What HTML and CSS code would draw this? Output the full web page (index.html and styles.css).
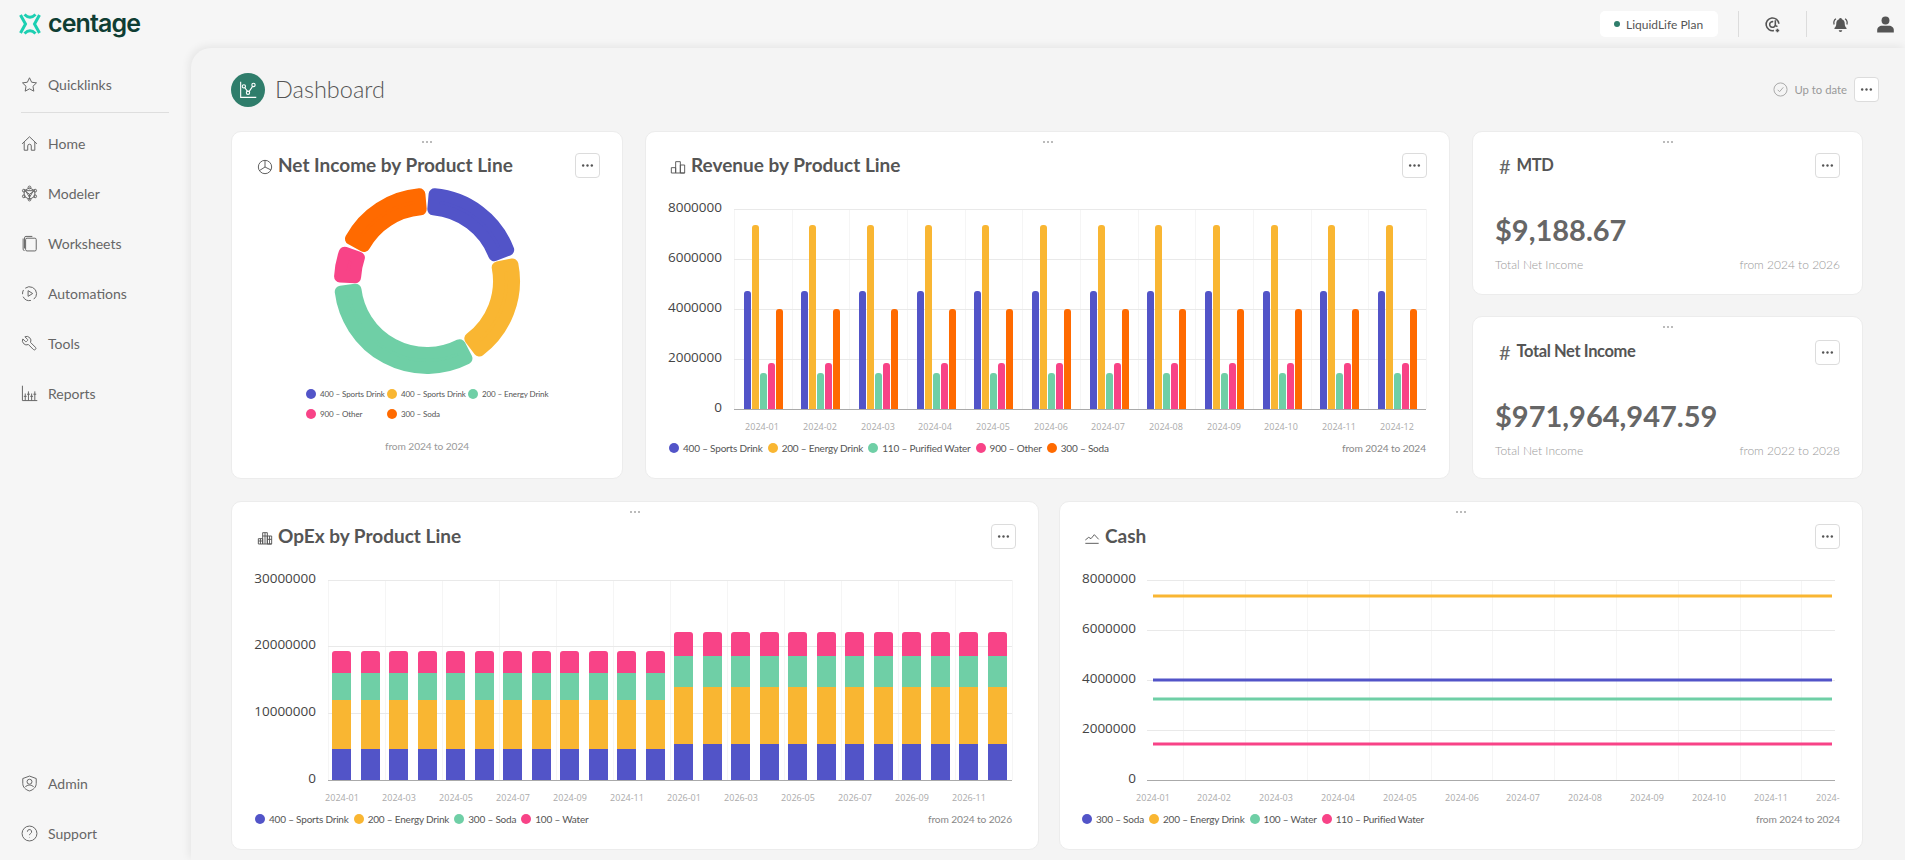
FILE: index.html
```html
<!DOCTYPE html>
<html lang="en">
<head>
<meta charset="utf-8">
<title>Dashboard</title>
<link rel="stylesheet" href="styles.css">
</head>
<body>
<svg class="defs" width="0" height="0" aria-hidden="true">
  <defs>
    <symbol id="i-more" viewBox="0 0 25 25"><circle cx="7.8" cy="12.5" r="1.3"/><circle cx="12.5" cy="12.5" r="1.3"/><circle cx="17.2" cy="12.5" r="1.3"/></symbol>
    <symbol id="i-pie" viewBox="0 0 24 24"><circle cx="12" cy="12" r="10"/><path d="M12 2v10l9 4.500M12 12l-8.500 5.500"/></symbol>
    <symbol id="i-bars" viewBox="0 0 24 24"><path d="M2 21V13h6.500v8M8.500 21V4h7v17M15.500 21V9H22v12zM2 21h20"/></symbol>
    <symbol id="i-stack" viewBox="0 0 24 24"><path d="M2 21V13h6.500v8M8.500 21V4h7v17M15.500 21V9H22v12zM2 21h20M2 16.500h6.500M8.500 9h7M15.500 14H22M12 4v17M5.200 13v8M18.800 9v12"/></symbol>
    <symbol id="i-area" viewBox="0 0 24 24"><path d="M2 15l5-4 3.500 2 5-6 6.500 7M2 20h20"/></symbol>
  </defs>
</svg>

<header class="topbar">
  <div class="brand">
    <svg class="brand-mark" viewBox="0 0 22 22"><path d="M1.500 2 6.500 11l-5 9M20.500 2 15.500 11l5 9M5.500 1.500Q11 7 16.500 1.500M5.500 20.500Q11 15 16.500 20.500"/></svg>
    <span class="brand-name">centage</span>
  </div>
  <div class="top-actions">
    <div class="plan"><span class="plan-dot"></span>LiquidLife Plan</div>
    <span class="top-sep"></span>
    <svg class="top-icon stroke" viewBox="0 0 24 24"><path d="M21 11a9 9 0 1 0-7 9.500"/><path d="M16 12a4 4 0 1 1-3-3.900M16 6v7a2 2 0 0 0 3 1M19 18v5M16.500 20.500h5"/></svg>
    <span class="top-sep"></span>
    <svg class="top-icon fill" viewBox="0 0 24 24"><path d="M12 3a2 2 0 0 1 2 1.700c3 1 4 3.800 4 6.300 0 3 1 4.500 2.500 6v1.500h-17V17C5 15.500 6 14 6 11c0-2.500 1-5.300 4-6.300A2 2 0 0 1 12 3zM9.500 20h5a2.500 2.500 0 0 1-5 0z"/><path class="ring" d="M3 12c-1-3 0-6 2.500-8M21 12c1-3 0-6-2.500-8"/></svg>
    <svg class="top-icon fill user" viewBox="0 0 24 24"><circle cx="12" cy="7" r="5"/><path d="M1.500 22v-3c0-3.500 3-5.500 6-5.500h9c3 0 6 2 6 5.500v3z"/></svg>
  </div>
</header>

<div class="shell">
  <nav class="sidebar">
    <a class="nav-item"><svg class="nav-icon" viewBox="0 0 24 24"><path d="M12 2.500l3 6.300 6.900.9-5 4.800 1.200 6.900-6.100-3.300-6.100 3.300 1.200-6.900-5-4.800 6.900-.9z"/></svg>Quicklinks</a>
    <div class="nav-rule"></div>
    <a class="nav-item"><svg class="nav-icon" viewBox="0 0 24 24"><path d="M1.500 12.500 12 2.500l10.500 10M4.500 10v11.500h5v-6a2.500 2.500 0 0 1 5 0v6h5V10"/></svg>Home</a>
    <a class="nav-item"><svg class="nav-icon" viewBox="0 0 24 24"><path d="M12 4 19.500 8v8L12 20.500 4.500 16V8zM6.500 8h11L12 17.500zM12 13v7M12 13 6 9M12 13l6-4"/><circle cx="12" cy="3.500" r="2"/><circle cx="4" cy="8" r="2"/><circle cx="20" cy="8" r="2"/><circle cx="4" cy="16" r="2"/><circle cx="20" cy="16" r="2"/><circle cx="12" cy="20.500" r="2"/></svg>Modeler</a>
    <a class="nav-item"><svg class="nav-icon" viewBox="0 0 24 24"><path d="M5 19V4a2 2 0 0 1 2-2h9"/><path d="M3 5v15a2 2 0 0 0 2 2"/><rect x="6.500" y="4.500" width="15" height="18" rx="2"/></svg>Worksheets</a>
    <a class="nav-item"><svg class="nav-icon" viewBox="0 0 24 24"><path d="M10 8l6.500 4-6.500 4z"/><path d="M6 4.500A10 10 0 0 1 22 12M22 12a10 10 0 0 1-4 8M14 21.800A10 10 0 0 1 3 16.500M2.200 13A10 10 0 0 1 3.500 7"/></svg>Automations</a>
    <a class="nav-item"><svg class="nav-icon" viewBox="0 0 24 24"><path d="M9.300 6.300a1 1 0 0 1 0 1.400L7.700 9.300a1 1 0 0 1-1.400 0L2.530 5.530a6 6 0 0 0 7.940 7.940l6.910 6.910a2.120 2.120 0 0 0 3-3l-6.910-6.910a6 6 0 0 0-7.940-7.940l3.760 3.760z"/></svg>Tools</a>
    <a class="nav-item"><svg class="nav-icon" viewBox="0 0 24 24"><path d="M2 1v21h21M6 22V12M10.500 22V9M15 22V12M19.500 22V9M4 16h4M8.500 13h4M13 16h4M17.500 13h4"/></svg>Reports</a>
    <div class="nav-bottom">
      <a class="nav-item"><svg class="nav-icon" viewBox="0 0 24 24"><path d="M12 1.500l9.500 3.500v7c0 5-4 9-9.500 10.500C6.500 21 2.500 17 2.500 12V5z"/><circle cx="12" cy="9.500" r="3.500"/><path d="M6 17c1.500-2 3.500-2.700 6-2.700s4.500.7 6 2.700"/></svg>Admin</a>
      <a class="nav-item"><svg class="nav-icon" viewBox="0 0 24 24"><circle cx="12" cy="12" r="10.500"/><path d="M9 9.500a3 3 0 1 1 4.500 2.500c-1 .6-1.500 1.200-1.500 2.300M12 17.500v.5"/></svg>Support</a>
    </div>
  </nav>

  <main class="main">
    <div class="page-head">
      <div class="page-title">
        <span class="page-badge"><svg viewBox="0 0 24 24"><path d="M4 3v17h17M8.500 9.500l3 4M13 14l4-6"/><circle cx="7.500" cy="8" r="1.800"/><circle cx="12" cy="15" r="1.800"/><circle cx="18" cy="6.500" r="1.800"/></svg></span>
        <h1>Dashboard</h1>
      </div>
      <div class="page-status">
        <svg class="status-icon" viewBox="0 0 24 24"><circle cx="12" cy="12" r="10.500"/><path d="M7.500 12.500l3 3 6-7"/></svg>
        <span>Up to date</span>
        <button class="more"><svg><use href="#i-more"/></svg></button>
      </div>
    </div>

    <div class="row row-top">
      <section class="card card-first">
        <span class="grip"></span>
        <div class="card-head">
          <h2 class="card-title"><svg class="title-icon"><use href="#i-pie"/></svg>Net Income by Product Line</h2>
          <button class="more"><svg><use href="#i-more"/></svg></button>
        </div>
        <svg class="chart" width="392" height="200" viewBox="231 185 392 200">
          <g class="donut" transform="translate(427 281)">
            <path class="s-blue" d="M7.600 -86.700A87 87 0 0 1 81.200 -31.200L67.200 -25.800A72 72 0 0 0 6.300 -71.700Z"/>
            <path class="s-yellow" d="M85.400 -16.600A87 87 0 0 1 52.400 69.500L43.300 57.500A72 72 0 0 0 70.700 -13.700Z"/>
            <path class="s-green" d="M39.500 77.500A87 87 0 0 1 -86.300 10.600L-71.500 8.800A72 72 0 0 0 32.700 64.200Z"/>
            <path class="s-pink" d="M-86.900 -4.600A87 87 0 0 1 -82.300 -28.300L-68.100 -23.400A72 72 0 0 0 -71.900 -3.800Z"/>
            <path class="s-orange" d="M-76.100 -42.200A87 87 0 0 1 -7.600 -86.700L-6.300 -71.700A72 72 0 0 0 -63 -34.900Z"/>
          </g>
        </svg>
        <div class="legend-grid">
          <span class="lg"><i class="dot blue"></i>400 – Sports Drink</span>
          <span class="lg"><i class="dot yellow"></i>400 – Sports Drink</span>
          <span class="lg"><i class="dot green"></i>200 – Energy Drink</span>
          <span class="lg"><i class="dot pink"></i>900 – Other</span>
          <span class="lg"><i class="dot orange"></i>300 – Soda</span>
        </div>
        <p class="range range-center">from 2024 to 2024</p>
      </section>

      <section class="card">
        <span class="grip"></span>
        <div class="card-head">
          <h2 class="card-title"><svg class="title-icon"><use href="#i-bars"/></svg>Revenue by Product Line</h2>
          <button class="more"><svg><use href="#i-more"/></svg></button>
        </div>
        <svg class="chart" width="805" height="250" viewBox="645 185 805 250">
          <defs>
            <g id="rev-group">
              <path class="s-blue-f" d="M0 409V294a3 3 0 0 1 3-3h1a3 3 0 0 1 3 3V409z"/>
              <path class="s-yellow-f" d="M8 409V228a3 3 0 0 1 3-3h1a3 3 0 0 1 3 3V409z"/>
              <path class="s-green-f" d="M16 409V376a3 3 0 0 1 3-3h1a3 3 0 0 1 3 3V409z"/>
              <path class="s-pink-f" d="M24 409V366a3 3 0 0 1 3-3h1a3 3 0 0 1 3 3V409z"/>
              <path class="s-orange-f" d="M32 409V312a3 3 0 0 1 3-3h1a3 3 0 0 1 3 3V409z"/>
            </g>
          </defs>
          <path class="grid-v" d="M734.500 209V409M792.500 209V409M849.500 209V409M907.500 209V409M965.500 209V409M1022.500 209V409M1080.500 209V409M1138.500 209V409M1195.500 209V409M1253.500 209V409M1311.500 209V409M1368.500 209V409M1426.500 209V409"/>
          <path class="grid-h" d="M734 209.500H1426M734 259.500H1426M734 309.500H1426M734 359.500H1426"/>
          <use href="#rev-group" x="744"/><use href="#rev-group" x="801"/><use href="#rev-group" x="859"/><use href="#rev-group" x="917"/><use href="#rev-group" x="974"/><use href="#rev-group" x="1032"/><use href="#rev-group" x="1090"/><use href="#rev-group" x="1147"/><use href="#rev-group" x="1205"/><use href="#rev-group" x="1263"/><use href="#rev-group" x="1320"/><use href="#rev-group" x="1378"/>
          <path class="axis" d="M734 409.500H1426"/>
          <text class="ylab" x="722" y="207">8000000</text><text class="ylab" x="722" y="257">6000000</text><text class="ylab" x="722" y="307">4000000</text><text class="ylab" x="722" y="357">2000000</text><text class="ylab" x="722" y="407">0</text>
          <text class="xlab" x="762" y="426">2024-01</text><text class="xlab" x="820" y="426">2024-02</text><text class="xlab" x="878" y="426">2024-03</text><text class="xlab" x="935" y="426">2024-04</text><text class="xlab" x="993" y="426">2024-05</text><text class="xlab" x="1051" y="426">2024-06</text><text class="xlab" x="1108" y="426">2024-07</text><text class="xlab" x="1166" y="426">2024-08</text><text class="xlab" x="1224" y="426">2024-09</text><text class="xlab" x="1281" y="426">2024-10</text><text class="xlab" x="1339" y="426">2024-11</text><text class="xlab" x="1397" y="426">2024-12</text>
        </svg>
        <div class="card-foot foot-rev">
          <div class="legend">
            <span class="lg"><i class="dot blue"></i>400 – Sports Drink</span>
            <span class="lg"><i class="dot yellow"></i>200 – Energy Drink</span>
            <span class="lg"><i class="dot green"></i>110 – Purified Water</span>
            <span class="lg"><i class="dot pink"></i>900 – Other</span>
            <span class="lg"><i class="dot orange"></i>300 – Soda</span>
          </div>
          <p class="range">from 2024 to 2024</p>
        </div>
      </section>

      <div class="stats">
        <section class="card stat">
          <span class="grip"></span>
          <div class="card-head">
            <h2 class="card-title"><span class="hash">#</span>MTD</h2>
            <button class="more"><svg><use href="#i-more"/></svg></button>
          </div>
          <p class="stat-value">$9,188.67</p>
          <div class="stat-foot"><span>Total Net Income</span><span>from 2024 to 2026</span></div>
        </section>
        <section class="card stat stat-low">
          <span class="grip"></span>
          <div class="card-head">
            <h2 class="card-title"><span class="hash">#</span>Total Net Income</h2>
            <button class="more"><svg><use href="#i-more"/></svg></button>
          </div>
          <p class="stat-value">$971,964,947.59</p>
          <div class="stat-foot"><span>Total Net Income</span><span>from 2022 to 2028</span></div>
        </section>
      </div>
    </div>

    <div class="row row-bottom">
      <section class="card card-low card-first">
        <span class="grip"></span>
        <div class="card-head">
          <h2 class="card-title"><svg class="title-icon"><use href="#i-stack"/></svg>OpEx by Product Line</h2>
          <button class="more"><svg><use href="#i-more"/></svg></button>
        </div>
        <svg class="chart" width="808" height="250" viewBox="231 556 808 250">
          <defs>
            <g id="stack-a">
              <rect class="s-blue-f" y="749" width="19" height="31"/>
              <rect class="s-yellow-f" y="700" width="19" height="49"/>
              <rect class="s-green-f" y="673" width="19" height="27"/>
              <path class="s-pink-f" d="M0 673V654a3 3 0 0 1 3-3h13a3 3 0 0 1 3 3V673z"/>
            </g>
            <g id="stack-b">
              <rect class="s-blue-f" y="744" width="19" height="36"/>
              <rect class="s-yellow-f" y="687" width="19" height="57"/>
              <rect class="s-green-f" y="656" width="19" height="31"/>
              <path class="s-pink-f" d="M0 656V635a3 3 0 0 1 3-3h13a3 3 0 0 1 3 3V656z"/>
            </g>
            <clipPath id="cash-clip"><rect x="1059" y="556" width="781" height="250"/></clipPath>
          </defs>
          <path class="grid-v" d="M328.500 580V780M385.500 580V780M442.500 580V780M499.500 580V780M556.500 580V780M613.500 580V780M670.500 580V780M727.500 580V780M784.500 580V780M841.500 580V780M898.500 580V780M955.500 580V780M1012.500 580V780"/>
          <path class="grid-h" d="M328 580.500H1012M328 646.500H1012M328 713.500H1012"/>
          <use href="#stack-a" x="332"/><use href="#stack-a" x="361"/><use href="#stack-a" x="389"/><use href="#stack-a" x="418"/><use href="#stack-a" x="446"/><use href="#stack-a" x="475"/><use href="#stack-a" x="503"/><use href="#stack-a" x="532"/><use href="#stack-a" x="560"/><use href="#stack-a" x="589"/><use href="#stack-a" x="617"/><use href="#stack-a" x="646"/>
          <use href="#stack-b" x="674"/><use href="#stack-b" x="703"/><use href="#stack-b" x="731"/><use href="#stack-b" x="760"/><use href="#stack-b" x="788"/><use href="#stack-b" x="817"/><use href="#stack-b" x="845"/><use href="#stack-b" x="874"/><use href="#stack-b" x="902"/><use href="#stack-b" x="931"/><use href="#stack-b" x="959"/><use href="#stack-b" x="988"/>
          <path class="axis" d="M328 780.500H1012"/>
          <text class="ylab" x="316" y="578">30000000</text><text class="ylab" x="316" y="644">20000000</text><text class="ylab" x="316" y="711">10000000</text><text class="ylab" x="316" y="778">0</text>
          <text class="xlab" x="342" y="797">2024-01</text><text class="xlab" x="399" y="797">2024-03</text><text class="xlab" x="456" y="797">2024-05</text><text class="xlab" x="513" y="797">2024-07</text><text class="xlab" x="570" y="797">2024-09</text><text class="xlab" x="627" y="797">2024-11</text><text class="xlab" x="684" y="797">2026-01</text><text class="xlab" x="741" y="797">2026-03</text><text class="xlab" x="798" y="797">2026-05</text><text class="xlab" x="855" y="797">2026-07</text><text class="xlab" x="912" y="797">2026-09</text><text class="xlab" x="969" y="797">2026-11</text>
        </svg>
        <div class="card-foot foot-opex">
          <div class="legend">
            <span class="lg"><i class="dot blue"></i>400 – Sports Drink</span>
            <span class="lg"><i class="dot yellow"></i>200 – Energy Drink</span>
            <span class="lg"><i class="dot green"></i>300 – Soda</span>
            <span class="lg"><i class="dot pink"></i>100 – Water</span>
          </div>
          <p class="range">from 2024 to 2026</p>
        </div>
      </section>

      <section class="card card-low">
        <span class="grip"></span>
        <div class="card-head">
          <h2 class="card-title"><svg class="title-icon"><use href="#i-area"/></svg>Cash</h2>
          <button class="more"><svg><use href="#i-more"/></svg></button>
        </div>
        <svg class="chart" width="804" height="250" viewBox="1059 556 804 250">
          <path class="grid-v" d="M1183.500 580V780M1245.500 580V780M1307.500 580V780M1369.500 580V780M1431.500 580V780M1492.500 580V780M1554.500 580V780M1616.500 580V780M1678.500 580V780M1740.500 580V780M1801.500 580V780"/>
          <path class="grid-h" d="M1147 580.500H1835M1147 630.500H1835M1147 680.500H1835M1147 730.500H1835"/>
          <path class="axis" d="M1147 780.500H1835"/>
          <path class="line l-yellow" d="M1153 596H1832"/>
          <path class="line l-blue" d="M1153 680H1832"/>
          <path class="line l-green" d="M1153 699H1832"/>
          <path class="line l-pink" d="M1153 744H1832"/>
          <text class="ylab" x="1136" y="578">8000000</text><text class="ylab" x="1136" y="628">6000000</text><text class="ylab" x="1136" y="678">4000000</text><text class="ylab" x="1136" y="728">2000000</text><text class="ylab" x="1136" y="778">0</text>
          <g clip-path="url(#cash-clip)">
            <text class="xlab" x="1153" y="797">2024-01</text><text class="xlab" x="1214" y="797">2024-02</text><text class="xlab" x="1276" y="797">2024-03</text><text class="xlab" x="1338" y="797">2024-04</text><text class="xlab" x="1400" y="797">2024-05</text><text class="xlab" x="1462" y="797">2024-06</text><text class="xlab" x="1523" y="797">2024-07</text><text class="xlab" x="1585" y="797">2024-08</text><text class="xlab" x="1647" y="797">2024-09</text><text class="xlab" x="1709" y="797">2024-10</text><text class="xlab" x="1771" y="797">2024-11</text><text class="xlab" x="1833" y="797">2024-12</text>
          </g>
        </svg>
        <div class="card-foot foot-cash">
          <div class="legend">
            <span class="lg"><i class="dot blue"></i>300 – Soda</span>
            <span class="lg"><i class="dot yellow"></i>200 – Energy Drink</span>
            <span class="lg"><i class="dot green"></i>100 – Water</span>
            <span class="lg"><i class="dot pink"></i>110 – Purified Water</span>
          </div>
          <p class="range">from 2024 to 2024</p>
        </div>
      </section>
    </div>
  </main>
</div>
</body>
</html>
```

FILE: styles.css
```css
* { box-sizing: border-box; }
html, body { margin: 0; height: 100%; }
body {
  height: 860px;
  overflow: hidden;
  background: #f6f6f6;
  color: #555;
  font-family: Lato, "Noto Sans", sans-serif;
  display: flex;
  flex-direction: column;
}
h1, h2, p { margin: 0; font: inherit; }
.defs { position: absolute; }

/* top bar */
.topbar {
  height: 48px;
  flex: none;
  display: flex;
  align-items: center;
  justify-content: space-between;
  padding: 0 10px 0 19px;
}
.brand { display: flex; align-items: center; gap: 7px; }
.brand-mark { width: 22px; height: 22px; fill: none; stroke: #1ccfb2; stroke-width: 3; }
.brand-name { font: 600 25px/1 Inter, sans-serif; color: #0f3d33; letter-spacing: -0.9px; position: relative; top: -1px; }
.top-actions { display: flex; align-items: center; gap: 25px; }
.plan {
  width: 118px; height: 26px;
  margin-right: -5px;
  background: #fff;
  border-radius: 5px;
  display: flex;
  align-items: center;
  padding-left: 14px;
  gap: 6px;
  font-size: 12px;
  color: #555;
}
.plan-dot { width: 6px; height: 6px; border-radius: 50%; background: #2f7d6b; }
.top-sep { width: 1px; height: 26px; background: #dcdcdc; }
.top-icon { width: 17px; height: 17px; flex: none; }
.top-icon.stroke { fill: none; stroke: #555; stroke-width: 2.2; }
.top-icon.fill { fill: #555; }
.top-icon.user { width: 19px; height: 19px; margin-left: 2px; }
.ring { fill: none; stroke: #555; stroke-width: 1.8; }

/* shell */
.shell { flex: 1; display: flex; min-height: 0; }
.sidebar {
  width: 191px;
  flex: none;
  display: flex;
  flex-direction: column;
  padding: 11px 22px 2px 21px;
}
.nav-item {
  height: 50px;
  flex: none;
  display: flex;
  align-items: center;
  gap: 10px;
  font-size: 14px;
  color: #666;
}
.nav-icon { width: 17px; height: 17px; flex: none; fill: none; stroke: #666; stroke-width: 1.4; }
.nav-rule { height: 1px; background: #dedede; margin: 3px 0 5px; flex: none; }
.nav-bottom { margin-top: auto; }

/* main */
.main {
  flex: 1;
  min-width: 0;
  background: #f4f4f4;
  border-top-left-radius: 20px;
  box-shadow: -2px -2px 8px rgba(0, 0, 0, .07);
  padding: 0 42px 0 40px;
}
.page-head { height: 83px; display: flex; align-items: center; justify-content: space-between; }
.page-title { display: flex; align-items: center; gap: 10px; }
.page-badge {
  width: 34px; height: 34px;
  border-radius: 50%;
  background: #2f7d6b;
  display: flex;
  align-items: center;
  justify-content: center;
}
.page-badge svg { width: 22px; height: 22px; fill: none; stroke: #fff; stroke-width: 1.2; }
.page-title h1 { font-size: 23.500px; font-weight: 300; color: #555; position: relative; top: -1px; }
.page-status { display: flex; align-items: center; gap: 6px; font-size: 11.300px; color: #999; margin-right: -16px; }
.status-icon { width: 15px; height: 15px; fill: none; stroke: #aaa; stroke-width: 1.6; }
.page-status .more { margin-left: 1px; }

/* rows and cards */
.row { display: grid; }
.row-top { grid-template-columns: 392px 805px 391px; gap: 22px; height: 348px; }
.row-bottom { grid-template-columns: 808px 804px; gap: 20px; height: 349px; margin-top: 22px; }
.stats { display: flex; flex-direction: column; gap: 21px; min-height: 0; }
.card {
  position: relative;
  background: #fff;
  border: 1px solid #ececec;
  border-radius: 10px;
  overflow: hidden;
}
.grip {
  position: absolute;
  top: 9px;
  left: 50%;
  width: 12px;
  height: 2px;
  margin-left: -6px;
  background: radial-gradient(circle, #bbb 1px, transparent 1px) 0 0 / 4px 2px;
}
.card-head {
  display: flex;
  align-items: center;
  justify-content: space-between;
  padding: 21px 22px 7px 24px;
}
.card-first .card-head { padding-left: 25px; }
.card-low .card-head { padding-top: 22px; }
.card-title { display: flex; align-items: center; gap: 5px; font-size: 19px; font-weight: 700; color: #555; margin-top: -2px; }
.title-icon { width: 16px; height: 16px; fill: none; stroke: #555; stroke-width: 1.4; flex: none; position: relative; top: 2px; }
.stat .card-title { font-size: 16.500px; letter-spacing: -0.4px; gap: 6px; }
.hash { font-weight: 400; font-size: 20px; color: #666; margin: 2px 0 0 2px; letter-spacing: 0; }
.more {
  width: 25px; height: 25px;
  padding: 0;
  flex: none;
  background: #fff;
  border: 1px solid #dcdcdc;
  border-radius: 4px;
  display: block;
}
.more svg { width: 23px; height: 23px; fill: #555; display: block; }
.chart { display: block; margin-left: -1px; }

/* legends */
.legend { display: flex; align-items: center; gap: 5px; }
.lg { display: flex; align-items: center; gap: 4px; color: #555; font-size: 10px; letter-spacing: -0.2px; white-space: nowrap; }
.dot { width: 10px; height: 10px; border-radius: 50%; flex: none; }
.blue { background: #5254c8; }
.yellow { background: #f9b632; }
.green { background: #6fcfa6; }
.pink { background: #f84387; }
.orange { background: #ff6a00; }
.legend-grid {
  display: grid;
  grid-template-columns: repeat(3, 81px);
  grid-auto-rows: 20px;
  align-items: center;
  padding-left: 74px;
  margin-top: -1px;
}
.legend-grid .lg { font-size: 8px; letter-spacing: -0.1px; }
.range { font-size: 10.200px; letter-spacing: -0.1px; color: #888; white-space: nowrap; }
.range-center { text-align: center; margin-top: 16px; color: #999; }
.card-foot {
  height: 26px;
  display: flex;
  align-items: center;
  justify-content: space-between;
}
.foot-rev { padding: 0 23px 0 23px; }
.foot-opex { padding: 0 26px 0 23px; }
.foot-cash { padding: 0 22px 0 22px; }

/* stat cards */
.stat { flex: 1 1 0; padding-bottom: 0; }
.stat-value { padding: 0 22px; margin-top: 27px; font-size: 29px; line-height: 36px; font-weight: 700; color: #666; }
.stat-foot {
  margin-top: 9px;
  padding: 0 22px;
  display: flex;
  justify-content: space-between;
  font-size: 12px;
  line-height: 16px;
  font-weight: 300;
  color: #999;
}
.stat-low .card-head { padding-top: 23px; }
.stat-low .stat-value { margin-top: 26px; }
.stat-low .stat-foot { margin-top: 9px; }

/* svg chart parts */
.s-blue { fill: #5254c8; stroke: #5254c8; }
.s-yellow { fill: #f9b632; stroke: #f9b632; }
.s-green { fill: #6fcfa6; stroke: #6fcfa6; }
.s-pink { fill: #f84387; stroke: #f84387; }
.s-orange { fill: #ff6a00; stroke: #ff6a00; }
.donut path { stroke-width: 12; stroke-linejoin: round; }
.s-blue-f { fill: #5254c8; }
.s-yellow-f { fill: #f9b632; }
.s-green-f { fill: #6fcfa6; }
.s-pink-f { fill: #f84387; }
.s-orange-f { fill: #ff6a00; }
.grid-v { stroke: #f5f5f5; stroke-width: 1; fill: none; }
.grid-h { stroke: #e9e9e9; stroke-width: 1; fill: none; }
.axis { stroke: #aaa; stroke-width: 1; fill: none; }
.line { fill: none; stroke-width: 3; }
.l-yellow { stroke: #f9b632; }
.l-blue { stroke: #5254c8; }
.l-green { stroke: #6fcfa6; }
.l-pink { stroke: #f84387; }
.ylab { font: 13.500px "Open Sans", sans-serif; fill: #444; text-anchor: end; dominant-baseline: central; }
.xlab { font: 9px "Open Sans", sans-serif; fill: #aaa; text-anchor: middle; dominant-baseline: central; }
```
